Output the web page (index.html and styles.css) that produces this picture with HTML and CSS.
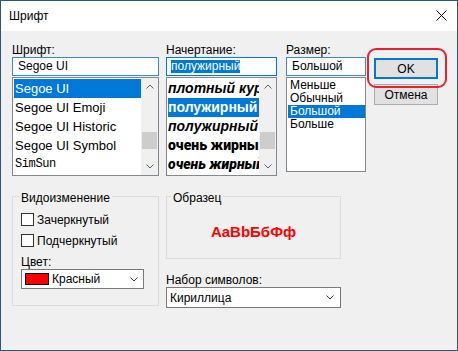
FILE: index.html
```html
<!DOCTYPE html>
<html lang="ru">
<head>
  <meta charset="UTF-8">
  <meta name="viewport" content="width=device-width, initial-scale=1.0">
  <title>Шрифт</title>
  <link rel="stylesheet" href="styles.css">
</head>
<body>
  <div class="window">
    <div class="titlebar">
      <span class="title">Шрифт</span>
      <svg class="close" width="11" height="11" viewBox="0 0 11 11">
        <path d="M0.5 0.5 L10.5 10.5 M10.5 0.5 L0.5 10.5" stroke="#000" stroke-width="1" fill="none"/>
      </svg>
    </div>

    <div class="content">
      <div class="top">
        <!-- font family -->
        <div class="col col-font">
          <div class="label">Шрифт:</div>
          <div class="edit">Segoe UI</div>
          <div class="list">
            <div class="items">
              <div class="row sel">Segoe UI</div>
              <div class="row">Segoe UI Emoji</div>
              <div class="row">Segoe UI Historic</div>
              <div class="row">Segoe UI Symbol</div>
              <div class="row mono">SimSun</div>
            </div>
            <div class="scroll">
              <div class="arrow">
                <svg width="8" height="5" viewBox="0 0 8 5"><path d="M0.5 4.5 L4 1 L7.5 4.5" stroke="#606060" fill="none"/></svg>
              </div>
              <div class="track"><div class="thumb"></div></div>
              <div class="arrow">
                <svg width="8" height="5" viewBox="0 0 8 5"><path d="M0.5 0.5 L4 4 L7.5 0.5" stroke="#606060" fill="none"/></svg>
              </div>
            </div>
          </div>
        </div>

        <!-- style -->
        <div class="col col-style">
          <div class="label">Начертание:</div>
          <div class="edit edit-focus"><span class="selected">полужирный</span></div>
          <div class="list">
            <div class="items style-items">
              <div class="row semibold-italic">плотный курсив</div>
              <div class="row bold sel">полужирный</div>
              <div class="row bold-italic">полужирный курсив</div>
              <div class="row black">очень жирный</div>
              <div class="row black-italic">очень жирный курсив</div>
            </div>
            <div class="scroll">
              <div class="arrow">
                <svg width="8" height="5" viewBox="0 0 8 5"><path d="M0.5 4.5 L4 1 L7.5 4.5" stroke="#606060" fill="none"/></svg>
              </div>
              <div class="track"><div class="thumb"></div></div>
              <div class="arrow">
                <svg width="8" height="5" viewBox="0 0 8 5"><path d="M0.5 0.5 L4 4 L7.5 0.5" stroke="#606060" fill="none"/></svg>
              </div>
            </div>
          </div>
        </div>

        <!-- size -->
        <div class="col col-size">
          <div class="label">Размер:</div>
          <div class="edit">Большой</div>
          <div class="list size-list">
            <div class="items">
              <div class="srow">Меньше</div>
              <div class="srow">Обычный</div>
              <div class="srow sel">Большой</div>
              <div class="srow">Больше</div>
            </div>
          </div>
        </div>

        <div class="buttons">
          <div class="btn btn-default">OK</div>
          <div class="btn">Отмена</div>
          <div class="ring"></div>
        </div>
      </div>

      <div class="bottom">
        <div class="group effects">
          <div class="group-title">Видоизменение</div>
          <div class="check-row"><span class="checkbox"></span>Зачеркнутый</div>
          <div class="check-row"><span class="checkbox"></span>Подчеркнутый</div>
          <div class="label color-label">Цвет:</div>
          <div class="combo color-combo">
            <span class="swatch"></span>
            <span class="combo-text">Красный</span>
            <svg class="chevron" width="8" height="5" viewBox="0 0 8 5"><path d="M0.5 0.5 L4 4 L7.5 0.5" stroke="#444" fill="none"/></svg>
          </div>
        </div>

        <div class="col col-right">
          <div class="group sample">
            <div class="group-title">Образец</div>
            <div class="sample-text">AaBbБбФф</div>
          </div>
          <div class="label charset-label">Набор символов:</div>
          <div class="combo charset-combo">
            <span class="combo-text">Кириллица</span>
            <svg class="chevron" width="8" height="5" viewBox="0 0 8 5"><path d="M0.5 0.5 L4 4 L7.5 0.5" stroke="#444" fill="none"/></svg>
          </div>
        </div>
      </div>
    </div>
  </div>
</body>
</html>
```

FILE: styles.css
```css
/* Font dialog */
body {
  margin: 0;
  font-family: "Liberation Sans", Arial, sans-serif;
  font-size: 12px;
  color: #000;
}

.window {
  width: 458px;
  height: 351px;
  box-sizing: border-box;
  border: 1px solid #2a587c;
  background: #f0f0f0;
  display: flex;
  flex-direction: column;
}

.titlebar {
  height: 30px;
  flex: none;
  background: #fff;
  display: flex;
  align-items: center;
  padding-left: 8px;
}

.title {
  line-height: 14px;
}

.close {
  margin-left: auto;
  margin-right: 10px;
  margin-top: -1px;
}

.content {
  padding: 12px 0 0 11px;
}

.top {
  display: flex;
  align-items: flex-start;
}

.label {
  line-height: 14px;
  height: 14px;
  white-space: nowrap;
}

.col-font {
  width: 147px;
}

.col-style {
  width: 111px;
  margin-left: 7px;
}

.col-size {
  width: 80px;
  margin-left: 9px;
}

.edit {
  height: 19px;
  box-sizing: border-box;
  border: 1px solid #3d8ad4;
  background: #fff;
  line-height: 17px;
  padding: 0 5px;
  white-space: nowrap;
  overflow: hidden;
}

.edit-focus {
  border-color: #0078d7;
  padding-left: 4px;
}

.selected {
  display: inline-block;
  line-height: 13px;
  background: #0078d7;
  color: #fff;
  vertical-align: middle;
}

.list {
  margin-top: 1px;
  height: 99px;
  box-sizing: border-box;
  border: 1px solid #828790;
  background: #fff;
  display: flex;
}

.items {
  flex: 1;
  min-width: 0;
  padding: 1px 0 0 1px;
  overflow: hidden;
}

.row {
  height: 19px;
  line-height: 19px;
  padding-left: 1px;
  font-size: 13px;
  white-space: nowrap;
  overflow: hidden;
}

.sel {
  background: #0078d7;
  color: #fff;
}

.mono {
  font-family: "Liberation Mono", monospace;
  font-size: 12px;
  letter-spacing: -0.4px;
}

.style-items .row {
  font-size: 14px;
  padding-left: 0;
}

.semibold-italic {
  font-weight: 700;
  font-style: italic;
}

.bold {
  font-weight: 700;
}

.bold-italic {
  font-weight: 700;
  font-style: italic;
}

.black {
  font-family: Roboto, "Liberation Sans", sans-serif;
  font-weight: 900;
}

.black-italic {
  font-family: Roboto, "Liberation Sans", sans-serif;
  font-weight: 900;
  font-style: italic;
}

.scroll {
  width: 17px;
  flex: none;
  background: #f0f0f0;
  display: flex;
  flex-direction: column;
}

.arrow {
  height: 17px;
  display: flex;
  align-items: center;
  justify-content: center;
}

.track {
  flex: 1;
}

.thumb {
  margin: 37px 1px 0;
  height: 17px;
  background: #cdcdcd;
}

.size-list {
  height: 95px;
}

.srow {
  height: 13px;
  line-height: 13px;
  padding-left: 2px;
  white-space: nowrap;
}

.buttons {
  position: relative;
  width: 64px;
  margin-left: 8px;
  padding-top: 15px;
}

.btn {
  height: 21px;
  box-sizing: border-box;
  border: 1px solid #adadad;
  background: #e1e1e1;
  display: flex;
  align-items: center;
  justify-content: center;
  margin-bottom: 5px;
}

.btn-default {
  border: 2px solid #0078d7;
}

.ring {
  position: absolute;
  left: -7px;
  top: 5px;
  width: 80px;
  height: 40px;
  box-sizing: border-box;
  border: 2px solid #e8222c;
  border-radius: 9px;
}

.bottom {
  display: flex;
  align-items: flex-start;
  margin-top: 20px;
}

.group {
  border: 1px solid #dcdcdc;
  box-sizing: border-box;
}

.group-title {
  width: fit-content;
  margin-top: -6px;
  margin-left: -2px;
  padding: 0 2px;
  line-height: 14px;
  background: #f0f0f0;
}

.effects {
  width: 147px;
  height: 110px;
  padding: 0 8px;
}

.check-row {
  display: flex;
  align-items: center;
  height: 13px;
  margin-top: 8px;
  white-space: nowrap;
}

.checkbox {
  width: 13px;
  height: 13px;
  box-sizing: border-box;
  border: 1px solid #333;
  background: #fff;
  margin-right: 3px;
}

.color-label {
  margin-top: 8px;
}

.combo {
  height: 21px;
  box-sizing: border-box;
  border: 1px solid #7a7a7a;
  background: #fff;
  display: flex;
  align-items: center;
  padding-left: 3px;
}

.color-combo {
  width: 123px;
  height: 20px;
}

.swatch {
  width: 24px;
  height: 12px;
  box-sizing: border-box;
  border: 1px solid #000;
  background: #ff0000;
  margin-right: 3px;
}

.chevron {
  margin-left: auto;
  margin-right: 5px;
}

.col-right {
  width: 175px;
  margin-left: 7px;
}

.sample {
  height: 63px;
  padding: 0 6px;
  display: flex;
  flex-direction: column;
}

.sample-text {
  flex: 1;
  display: flex;
  align-items: center;
  justify-content: center;
  color: #ff0000;
  font-weight: 700;
  font-size: 15px;
}

.charset-label {
  margin-top: 14px;
}

.charset-combo .chevron {
  margin-right: 6px;
}
```
